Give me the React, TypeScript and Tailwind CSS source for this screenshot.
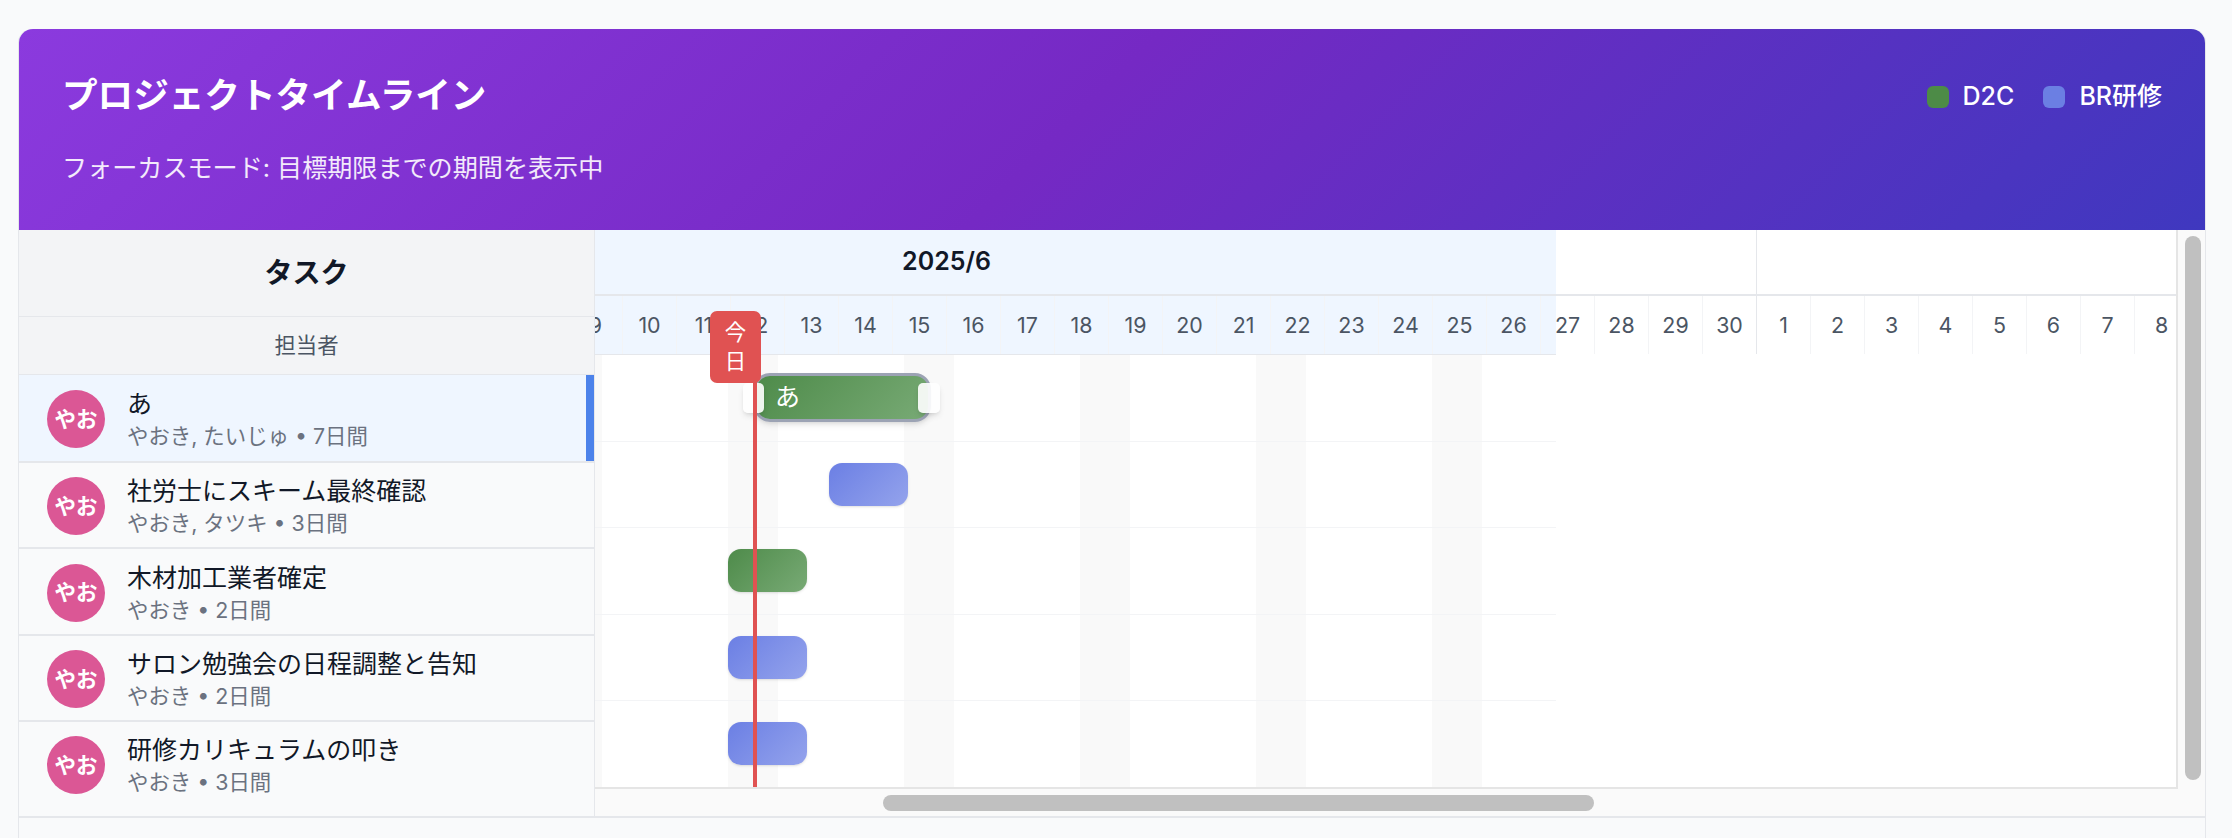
import React from "react";

type Task = {
  title: string;
  sub: string;
  rowClass: string;
  left: number;
  width: number;
  kind: "d2c" | "br";
  active?: boolean;
};

const tasks: Task[] = [
  { title: "あ", sub: "やおき, たいじゅ • 7日間", rowClass: "h-[88px] bg-[#eff6ff] border-b-2", left: 617, width: 177, kind: "d2c", active: true },
  { title: "社労士にスキーム最終確認", sub: "やおき, タツキ • 3日間", rowClass: "h-[86px] border-b-2", left: 692, width: 79, kind: "br" },
  { title: "木材加工業者確定", sub: "やおき • 2日間", rowClass: "h-[87px] border-b-2", left: 591, width: 79, kind: "d2c" },
  { title: "サロン勉強会の日程調整と告知", sub: "やおき • 2日間", rowClass: "h-[86px] border-b-2", left: 591, width: 79, kind: "br" },
  { title: "研修カリキュラムの叩き", sub: "やおき • 3日間", rowClass: "h-[86px] border-b-2 border-b-transparent", left: 591, width: 79, kind: "br" },
];

// days 1-8 are scrolled out of view behind the task list
const juneDays = Array.from({ length: 22 }, (_, i) => i + 9);
const julyDays = Array.from({ length: 8 }, (_, i) => i + 1);

function DayCell({ day, last }: { day: number; last?: boolean }) {
  return (
    <div
      className={`w-[54px] shrink-0 flex items-center justify-center text-[21.4px] text-[#4b5563] border-r ${
        last ? "border-[#e5e7eb]" : "border-[#f3f4f6]"
      }`}
    >
      {day}
    </div>
  );
}

function Bar({ task }: { task: Task }) {
  const color =
    task.kind === "d2c"
      ? "bg-[linear-gradient(135deg,#4e8b4a,#78aa75)]"
      : "bg-[linear-gradient(135deg,#6b7fe4,#94a3ec)]";
  if (task.active) {
    return (
      <div
        className={`absolute top-[18px] h-[49px] rounded-[16px] border-[3px] border-[#9ca3b4] shadow-md flex items-center pl-[18px] text-[25px] text-white ${color}`}
        style={{ left: task.left, width: task.width }}
      >
        {task.title}
        <span className="absolute left-[-14px] top-[7px] w-[21px] h-[30px] rounded-[5px] bg-white/90 shadow-md" />
        <span className="absolute right-[-12px] top-[7px] w-[22px] h-[30px] rounded-[5px] bg-white/90 shadow-md" />
      </div>
    );
  }
  return (
    <div
      className={`absolute top-[21px] h-[43px] rounded-[13px] shadow-sm ${color}`}
      style={{ left: task.left, width: task.width }}
    />
  );
}

export default function App() {
  return (
    <div className="h-[838px] overflow-hidden bg-[#f9fafb] pt-[29px] px-[19px] pr-[27px] [font-family:Inter,'Noto_Sans_CJK_JP',sans-serif]">
      <div className="h-[850px] rounded-t-[14px] border-x border-[#e5e7eb] -mx-px">
        {/* Header */}
        <div className="h-[201px] rounded-t-[14px] bg-[linear-gradient(135deg,#8b3ade_0%,#7529c4_48%,#3f38bf_100%)] px-[43px] pt-[47px] flex justify-between text-white">
          <div>
            <h1 className="text-[35.6px] leading-[40px] font-bold">プロジェクトタイムライン</h1>
            <p className="mt-[36px] text-[25.1px] leading-[32px] text-white/90">フォーカスモード: 目標期限までの期間を表示中</p>
          </div>
          <div className="flex gap-[29px] h-[42px] items-center text-[25px] font-medium">
            <div className="flex items-center gap-[14px]">
              <span className="w-[22px] h-[22px] rounded-[6px] bg-[#4d8b47]" />
              D2C
            </div>
            <div className="flex items-center gap-[14px]">
              <span className="w-[22px] h-[22px] rounded-[6px] bg-[#6b7fe3]" />
              BR研修
            </div>
          </div>
        </div>

        {/* Body */}
        <div className="flex h-[588px] border-b-2 border-[#e5e7eb]">
          {/* Task list */}
          <div className="w-[576px] shrink-0 border-r border-[#e5e7eb] flex flex-col">
            <div className="h-[87px] bg-[#f3f4f6] border-b border-[#e5e7eb] flex items-center justify-center text-[28px] font-bold text-[#111827]">
              タスク
            </div>
            <div className="h-[58px] bg-[#f3f4f6] border-b border-[#e5e7eb] flex items-center justify-center text-[21.4px] text-[#4b5563]">
              担当者
            </div>
            {tasks.map((t) => (
              <div key={t.title} className={`relative flex items-center gap-[22px] pl-[28px] pt-[2px] border-[#e5e7eb] ${t.rowClass}`}>
                <div className="w-[58px] h-[58px] rounded-full bg-[#db5795] flex items-center justify-center text-white text-[21.4px] font-bold">
                  やお
                </div>
                <div className="pt-[2px]">
                  <div className="text-[25px] leading-[33px] text-[#111827]">{t.title}</div>
                  <div className="text-[21.4px] leading-[31px] text-[#6b7280]">{t.sub}</div>
                </div>
                {t.active && <span className="absolute right-0 top-0 bottom-0 w-[8px] bg-[#4c82ea]" />}
              </div>
            ))}
          </div>

          {/* Timeline */}
          <div className="flex-1 min-w-0 flex flex-col bg-[#fafafa]">
            <div className="flex h-[559px]">
              <div className="flex-1 min-w-0 overflow-hidden bg-white border-r-2 border-b-2 border-[#e5e5e5]">
                <div className="relative ml-[-458px] w-[2052px]">
                  {/* Month and day headers, tinted only as far as the grid reaches */}
                  <div className="bg-[linear-gradient(90deg,#eff6ff_1419px,transparent_1419px)]">
                    <div className="flex h-[66px] border-b-2 border-[#e5e7eb]">
                      <div className="w-[1620px] shrink-0 flex items-center justify-center text-[25px] font-semibold text-[#111827] border-r border-[#e5e7eb]">
                        2025/6
                      </div>
                      <div className="flex-1" />
                    </div>
                    <div className="flex h-[58px] pl-[432px]">
                      {juneDays.map((d) => (
                        <DayCell key={d} day={d} last={d === 30} />
                      ))}
                      {julyDays.map((d) => (
                        <DayCell key={`7-${d}`} day={d} />
                      ))}
                    </div>
                  </div>

                  {/* Grid rows */}
                  <div className="w-[1419px] border-t border-[#e5e7eb] bg-[repeating-linear-gradient(90deg,transparent_0,transparent_63px,#f9f9f9_63px,#f9f9f9_113px,transparent_113px,transparent_176px)]">
                    {tasks.map((t) => (
                      <div key={t.title} className="relative h-[86.5px] border-b border-[#f3f4f6]">
                        <Bar task={t} />
                      </div>
                    ))}
                  </div>

                  {/* Today marker */}
                  <div className="absolute left-[616px] top-[124px] bottom-0 w-[4px] bg-[#e05252]" />
                  <div className="absolute left-[573px] top-[81px] w-[51px] h-[72px] rounded-[7px] bg-[#e05252] px-[12px] py-[7px] text-center text-[21.4px] leading-[29px] text-white">
                    今日
                  </div>
                </div>
              </div>
              {/* Vertical scrollbar */}
              <div className="w-[27px] shrink-0 pt-[6px] pl-[7px]">
                <div className="w-[16px] h-[544px] rounded-full bg-[#c0c0c0]" />
              </div>
            </div>
            {/* Horizontal scrollbar */}
            <div className="h-[27px] pt-[6px] pl-[288px]">
              <div className="w-[711px] h-[16px] rounded-full bg-[#c0c0c0]" />
            </div>
          </div>
        </div>
      </div>
    </div>
  );
}
